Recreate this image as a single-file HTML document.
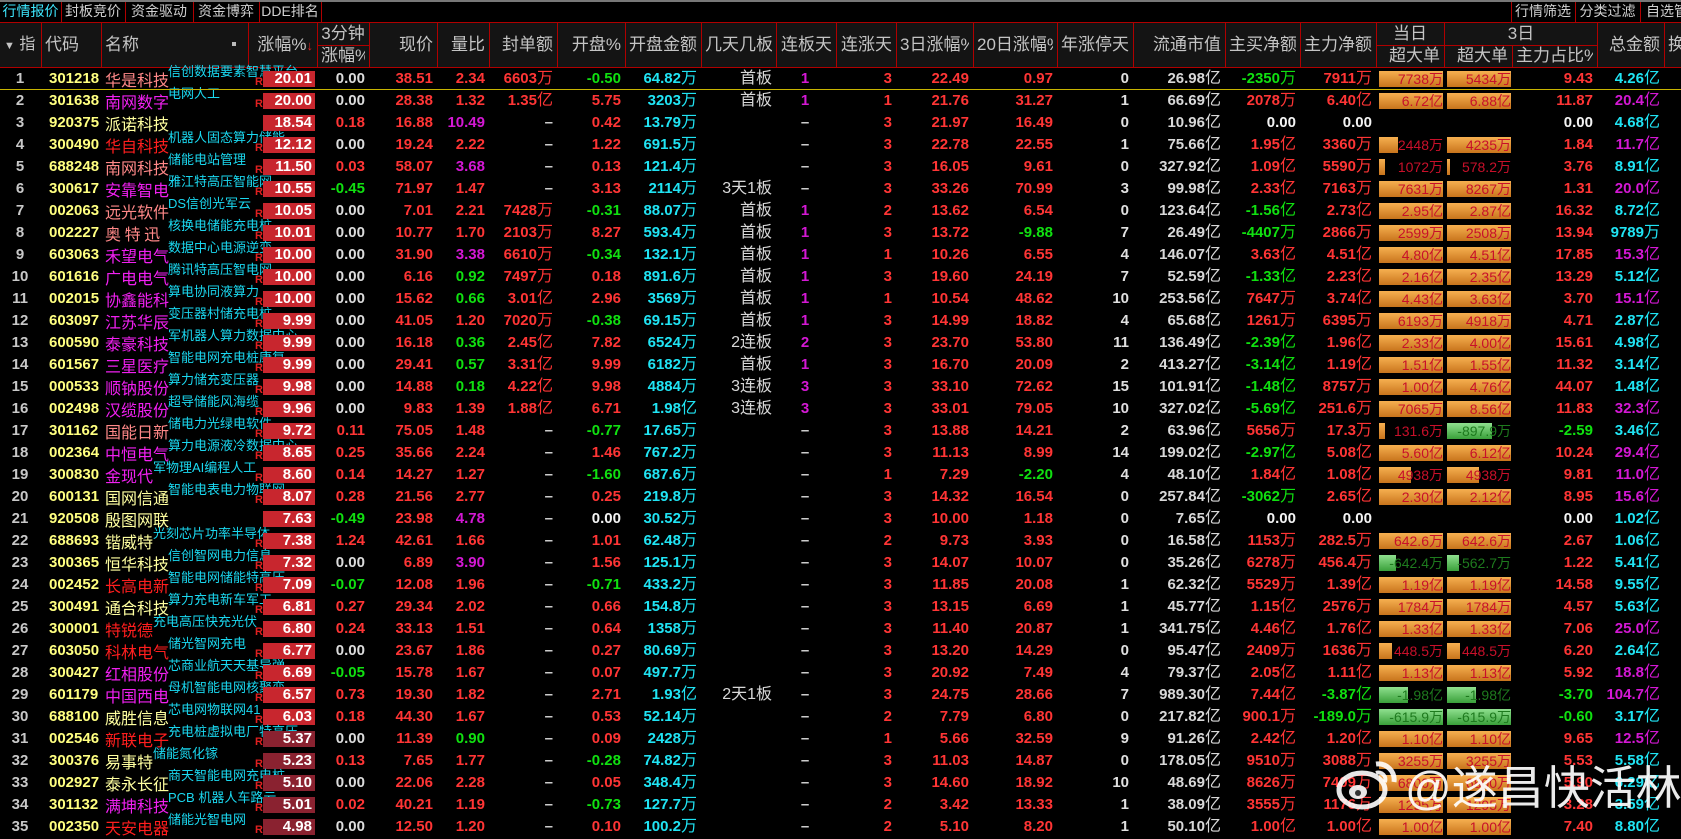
<!DOCTYPE html>
<html><head><meta charset="utf-8">
<style>
*{margin:0;padding:0;box-sizing:border-box}
body{width:1681px;height:823px;background:#000;overflow:hidden;position:relative;font-family:"Liberation Sans","Noto Sans CJK SC",sans-serif}
.a{position:absolute;white-space:nowrap}
.n{font-weight:bold;font-size:15px;line-height:22px;height:22px}
.u{font-weight:normal;font-size:16px;line-height:14px;font-family:"Noto Sans CJK SC",sans-serif}
.vl{position:absolute;width:1px;background:#b00000}
.tab{position:absolute;top:0;height:22px;line-height:22px;font-size:14px;color:#d0d0d0;text-align:center;font-family:"Liberation Sans","Noto Sans CJK SC",sans-serif}
</style></head><body>
<div class="a" style="left:0;top:0;width:1681px;height:2px;background:#777"></div>
<div class="a" style="left:0;top:22px;width:1681px;height:1px;background:#b00000"></div>
<div class="tab" style="left:0;width:61px;color:#3ee8ff">行情报价</div>
<div class="tab" style="left:61px;width:64px">封板竞价</div>
<div class="tab" style="left:125px;width:68px">资金驱动力</div>
<div class="tab" style="left:193px;width:66px">资金博弈</div>
<div class="tab" style="left:259px;width:62px">DDE排名</div>
<div class="tab" style="left:1511px;width:64px">行情筛选</div>
<div class="tab" style="left:1575px;width:65px">分类过滤</div>
<div class="tab" style="left:1640px;width:60px;text-align:left;padding-left:6px">自选管</div>
<div class="vl" style="left:61px;top:2px;height:20px"></div>
<div class="vl" style="left:125px;top:2px;height:20px"></div>
<div class="vl" style="left:193px;top:2px;height:20px"></div>
<div class="vl" style="left:259px;top:2px;height:20px"></div>
<div class="vl" style="left:321px;top:2px;height:20px"></div>
<div class="vl" style="left:1511px;top:2px;height:20px"></div>
<div class="vl" style="left:1575px;top:2px;height:20px"></div>
<div class="vl" style="left:1640px;top:2px;height:20px"></div>
<div id="hdr" class="a" style="left:0;top:23px;width:1681px;height:44px;background:#141414"></div>
<div class="a" style="left:0;top:67px;width:1681px;height:1px;background:#b00000"></div>
<div id="root"></div>
<div class="a" style="left:0;top:89px;width:1681px;height:1px;background:#c8b400"></div>
<svg class="a" style="left:1336px;top:758px" width="68" height="52" viewBox="0 0 68 52">
<ellipse cx="26" cy="32" rx="23" ry="17" fill="none" stroke="#fff" stroke-width="5" opacity="0.9"/>
<ellipse cx="22" cy="34" rx="9" ry="7" fill="#fff" opacity="0.9"/>
<circle cx="22" cy="35" r="3" fill="#333"/>
<path d="M40 6 A16 16 0 0 1 58 24" fill="none" stroke="#fff" stroke-width="5" opacity="0.9"/>
<path d="M40 15 A7 7 0 0 1 49 24" fill="none" stroke="#fff" stroke-width="4" opacity="0.9"/>
</svg>
<div class="a" style="left:1405px;top:752px;font-size:46px;color:#fff;opacity:0.92;font-family:'Liberation Sans','Noto Sans CJK SC',sans-serif">@遂昌快活林</div>
<script>
var C=[[0,41],[41,101],[101,248],[248,317],[317,369],[369,437],[437,489],[489,557],[557,625],[625,701],[701,776],[776,836],[836,896],[896,973],[973,1057],[1057,1133],[1133,1225],[1225,1300],[1300,1376],[1376,1444],[1444,1512],[1512,1597],[1597,1664],[1664,1690]];
var R=document.getElementById('root');var H='';
function el(x,y,w,h,st,t){H+='<div class="a" style="left:'+x+'px;top:'+y+'px;width:'+w+'px;height:'+h+'px;'+st+'">'+t+'</div>';}
C.forEach(function(c,i){if(i>0){var top=(i==21)?45:23;H+='<div class="vl" style="left:'+c[0]+'px;top:'+top+'px;height:'+(67-top)+'px"></div>';}});
function ht(i,txt,align,top,h){var c=C[i];el(c[0]+4,top||23,c[1]-c[0]-8,h||44,'line-height:'+(h||44)+'px;text-align:'+(align||'right')+';color:#c4c4c4;font-size:17px;overflow:hidden',txt);}
el(4,23,37,44,'line-height:44px;color:#c4c4c4;font-size:16px','<span style="font-size:11px">▼</span> 指');
ht(1,'代码','left');ht(2,'名称','left');
el(232,42,4,4,'background:#bbb','');
ht(3,'涨幅%<span style="color:#e02020;font-size:13px">↓</span>','right');
H+='<div class="a" style="left:317px;top:45px;width:52px;height:1px;background:#b00000"></div>';
ht(4,'3分钟','center',23,22);ht(4,'涨幅%','center',45,22);
var hs=['','','','','','现价','量比','封单额','开盘%','开盘金额','几天几板','连板天','连涨天','3日涨幅%','20日涨幅%','年涨停天','流通市值','主买净额','主力净额'];
for(var i=5;i<19;i++)ht(i,hs[i],i==10?'center':'right');
H+='<div class="a" style="left:1376px;top:45px;width:221px;height:1px;background:#b00000"></div>';
el(1376,23,68,22,'line-height:22px;text-align:center;color:#c4c4c4;font-size:17px','当日');
el(1445,23,152,22,'line-height:22px;text-align:center;color:#c4c4c4;font-size:17px','3日');
ht(19,'超大单','right',45,22);ht(20,'超大单','right',45,22);ht(21,'主力占比%','right',45,22);
ht(22,'总金额','right');ht(23,'换','left');
var RED='#ff3535',GRN='#10e010',WHT='#f4f4f4',CY='#20e4f4',MG='#d418d4',GR='#d0d0d0';
var NC={r:'#ff1e1e',s:'#ff8888',m:'#f020f0',y:'#ffffa0'};
var D=[
['301218','华是科技','s','信创数据要素智慧平台','20.01','0.00','38.51','2.34','6603万','-0.50','64.82万','首板','1','3','22.49','0.97','0','26.98亿','-2350万','7911万','7738万',1,'5434万',1,'9.43','4.26亿'],
['301638','南网数字','m','电网人工','20.00','0.00','28.38','1.32','1.35亿','5.75','3203万','首板','1','1','21.76','31.27','1','66.69亿','2078万','6.40亿','6.72亿',1,'6.88亿',1,'11.87','20.4亿'],
['920375','派诺科技','y','','18.54','0.18','16.88','10.49','–','0.42','13.79万','','–','3','21.97','16.49','0','10.96亿','0.00','0.00','',0,'',0,'0.00','4.68亿'],
['300490','华自科技','r','机器人固态算力储能','12.12','0.00','19.24','2.22','–','1.22','691.5万','','–','3','22.78','22.55','1','75.66亿','1.95亿','3360万','2448万',.3,'4235万',1,'1.84','11.7亿'],
['688248','南网科技','s','储能电站管理','11.50','0.03','58.07','3.68','–','0.13','121.4万','','–','3','16.05','9.61','0','327.92亿','1.09亿','5590万','1072万',.1,'578.2万',.05,'3.76','8.91亿'],
['300617','安靠智电','m','雅江特高压智能网','10.55','-0.45','71.97','1.47','–','3.13','2114万','3天1板','–','3','33.26','70.99','3','99.98亿','2.33亿','7163万','7631万',1,'8267万',1,'1.31','20.0亿'],
['002063','远光软件','s','DS信创光军云','10.05','0.00','7.01','2.21','7428万','-0.31','88.07万','首板','1','2','13.62','6.54','0','123.64亿','-1.56亿','2.73亿','2.95亿',1,'2.87亿',1,'16.32','8.72亿'],
['002227','奥 特 迅','s','核换电储能充电桩','10.01','0.00','10.77','1.70','2103万','8.27','593.4万','首板','1','3','13.72','-9.88','7','26.49亿','-4407万','2866万','2599万',1,'2508万',1,'13.94','9789万'],
['603063','禾望电气','m','数据中心电源逆变','10.00','0.00','31.90','3.38','6610万','-0.34','132.1万','首板','1','1','10.26','6.55','4','146.07亿','3.63亿','4.51亿','4.80亿',1,'4.51亿',1,'17.85','15.3亿'],
['601616','广电电气','m','腾讯特高压智电网','10.00','0.00','6.16','0.92','7497万','0.18','891.6万','首板','1','3','19.60','24.19','7','52.59亿','-1.33亿','2.23亿','2.16亿',1,'2.35亿',1,'13.29','5.12亿'],
['002015','协鑫能科','m','算电协同液算力','10.00','0.00','15.62','0.66','3.01亿','2.96','3569万','首板','1','1','10.54','48.62','10','253.56亿','7647万','3.74亿','4.43亿',1,'3.63亿',1,'3.70','15.1亿'],
['603097','江苏华辰','m','变压器村储充电桩','9.99','0.00','41.05','1.20','7020万','-0.38','69.15万','首板','1','3','14.99','18.82','4','65.68亿','1261万','6395万','6193万',1,'4918万',1,'4.71','2.87亿'],
['600590','泰豪科技','m','军机器人算力数据中心','9.99','0.00','16.18','0.36','2.45亿','7.82','6524万','2连板','2','3','23.70','53.80','11','136.49亿','-2.39亿','1.96亿','2.33亿',1,'4.00亿',1,'15.61','4.98亿'],
['601567','三星医疗','m','智能电网充电桩康复','9.99','0.00','29.41','0.57','3.31亿','9.99','6182万','首板','1','3','16.70','20.09','2','413.27亿','-3.14亿','1.19亿','1.51亿',1,'1.55亿',1,'11.32','3.14亿'],
['000533','顺钠股份','m','算力储充变压器','9.98','0.00','14.88','0.18','4.22亿','9.98','4884万','3连板','3','3','33.10','72.62','15','101.91亿','-1.48亿','8757万','1.00亿',1,'4.76亿',1,'44.07','1.48亿'],
['002498','汉缆股份','m','超导储能风海缆','9.96','0.00','9.83','1.39','1.88亿','6.71','1.98亿','3连板','3','3','33.01','79.05','10','327.02亿','-5.69亿','251.6万','7065万',1,'8.56亿',1,'11.83','32.3亿'],
['301162','国能日新','s','储电力光绿电软件','9.72','0.11','75.05','1.48','–','-0.77','17.65万','','–','3','13.88','14.21','2','63.96亿','5656万','17.3万','131.6万',.1,'-897.9万',.7,'-2.59','3.46亿'],
['002364','中恒电气','m','算力电源液冷数据中心','8.65','0.25','35.66','2.24','–','1.46','767.2万','','–','3','11.13','8.99','14','199.02亿','-2.97亿','5.08亿','5.60亿',1,'6.12亿',1,'10.24','29.4亿'],
['300830','金现代','m','军物理AI编程人工','8.60','0.14','14.27','1.27','–','-1.60','687.6万','','–','1','7.29','-2.20','4','48.10亿','1.84亿','1.08亿','4938万',.5,'4938万',.5,'9.81','11.0亿'],
['600131','国网信通','y','智能电表电力物联网','8.07','0.28','21.56','2.77','–','0.25','219.8万','','–','3','14.32','16.54','0','257.84亿','-3062万','2.65亿','2.30亿',1,'2.12亿',1,'8.95','15.6亿'],
['920508','殷图网联','y','','7.63','-0.49','23.98','4.78','–','0.00','30.52万','','–','3','10.00','1.18','0','7.65亿','0.00','0.00','',0,'',0,'0.00','1.02亿'],
['688693','锴威特','y','光刻芯片功率半导体','7.38','1.24','42.61','1.66','–','1.01','62.48万','','–','2','9.73','3.93','0','16.58亿','1153万','282.5万','642.6万',1,'642.6万',1,'2.67','1.06亿'],
['300365','恒华科技','y','信创智网电力信息','7.32','0.00','6.89','3.90','–','1.56','125.1万','','–','3','14.07','10.07','0','35.26亿','6278万','456.4万','-642.4万',.26,'-562.7万',.18,'1.22','5.41亿'],
['002452','长高电新','r','智能电网储能特高压','7.09','-0.07','12.08','1.96','–','-0.71','433.2万','','–','3','11.85','20.08','1','62.32亿','5529万','1.39亿','1.19亿',1,'1.19亿',1,'14.58','9.55亿'],
['300491','通合科技','y','算力充电新车军工','6.81','0.27','29.34','2.02','–','0.66','154.8万','','–','3','13.15','6.69','1','45.77亿','1.15亿','2576万','1784万',1,'1784万',1,'4.57','5.63亿'],
['300001','特锐德','r','充电高压快充光伏','6.80','0.24','33.13','1.51','–','0.64','1358万','','–','3','11.40','20.87','1','341.75亿','4.46亿','1.76亿','1.33亿',1,'1.33亿',1,'7.06','25.0亿'],
['603050','科林电气','r','储光智网充电','6.77','0.00','23.67','1.86','–','0.27','80.69万','','–','3','13.20','14.29','0','95.47亿','2409万','1636万','448.5万',.2,'448.5万',.2,'6.20','2.64亿'],
['300427','红相股份','m','芯商业航天天基导弹','6.69','-0.05','15.78','1.67','–','0.07','497.7万','','–','3','20.92','7.49','4','79.37亿','2.05亿','1.11亿','1.13亿',1,'1.13亿',1,'5.92','18.8亿'],
['601179','中国西电','m','母机智能电网核聚变','6.57','0.73','19.30','1.82','–','2.71','1.93亿','2天1板','–','3','24.75','28.66','7','989.30亿','7.44亿','-3.87亿','-1.98亿',.45,'-1.98亿',.45,'-3.70','104.7亿'],
['688100','威胜信息','y','芯电网物联网41','6.03','0.18','44.30','1.67','–','0.53','52.14万','','–','2','7.79','6.80','0','217.82亿','900.1万','-189.0万','-615.9万',1,'-615.9万',1,'-0.60','3.17亿'],
['002546','新联电子','r','充电桩虚拟电厂特高压','5.37','0.00','11.39','0.90','–','0.09','2428万','','–','1','5.66','32.59','9','91.26亿','2.42亿','1.20亿','1.10亿',1,'1.10亿',1,'9.65','12.5亿'],
['300376','易事特','y','储能氮化镓','5.23','0.13','7.65','1.77','–','-0.28','74.82万','','–','3','11.03','14.87','0','178.05亿','9510万','3088万','3255万',1,'3255万',1,'5.53','5.58亿'],
['002927','泰永长征','y','商天智能电网充电桩','5.10','0.00','22.06','2.28','–','0.05','348.4万','','–','3','14.60','18.92','10','48.69亿','8626万','7409万','6800万',1,'6800万',1,'5.90','6.29亿'],
['301132','满坤科技','m','PCB 机器人车路云','5.01','0.02','40.21','1.19','–','-0.73','127.7万','','–','2','3.42','13.33','1','38.09亿','3555万','1176万','1295万',1,'1295万',1,'3.28','3.59亿'],
['002350','天安电器','r','储能光智电网','4.98','0.00','12.50','1.20','–','0.10','100.2万','','–','2','5.10','8.20','1','50.10亿','1.00亿','1.00亿','1.00亿',1,'1.00亿',1,'7.40','8.80亿']
];
function fmt(s){return s.replace(/([万亿])/,'<span class="u">$1</span>');}
function sc(s){if(s==='0.00'||s==='0')return WHT;return s.charAt(0)==='-'?GRN:RED;}
function cell(i,y,txt,col,align){var c=C[i];if(txt==='')return;el(c[0]+2,y,c[1]-c[0]-6,22,'overflow:hidden;color:'+col+';text-align:'+(align||'right'),'<span class="n" style="display:block">'+fmt(txt)+'</span>');}
function bar(i,y,txt,w){if(!txt)return;var c=C[i];var x=c[0]+3,W=64;var neg=txt.charAt(0)==='-';
 var bg=neg?'linear-gradient(#8fe08f,#3aa03a)':'linear-gradient(#f6b050,#c8741c)';
 H+='<div class="a" style="left:'+x+'px;top:'+(y+3)+'px;width:'+Math.max(3,Math.round(W*w))+'px;height:16px;background:'+bg+'"></div>';
 el(x,y,W,22,'line-height:22px;overflow:hidden;text-align:right;font-size:14px;color:'+(neg?'#1e7a1e':'#c8102a'),txt.replace(/([万亿])/,'<span style="font-family:Noto Sans CJK SC;line-height:14px">$1</span>'));}
D.forEach(function(d,k){var y=68+k*22;
 el(0,y,40,22,'line-height:22px;text-align:center;color:#c8c8c8;font-weight:bold;font-size:15px',String(k+1));
 el(49,y,52,22,'line-height:22px;color:#ffff80;font-weight:bold;font-size:15px',d[0]);
 var nw=d[1].length*15.5;
 el(105,y,nw+4,22,'line-height:22px;font-size:16px;color:'+NC[d[2]]+';font-family:Noto Sans CJK SC,sans-serif',d[1]);
 if(d[3])el(105+(d[1].length==3?47:62)+1,y-4,300-(105+62),18,'line-height:16px;font-size:13px;color:#1ad8f0;overflow:hidden;font-family:Liberation Sans,Noto Sans CJK SC,sans-serif',d[3]);
 if(d[3])el(255,y+8,8,12,'font-size:11px;font-weight:bold;line-height:12px;color:#e02020','R');
 var v=parseFloat(d[4]);
 el(263,y+3,52,16,'background:'+(v>=6?'#c8262e':'#8a2230')+';color:#fff;font-weight:bold;font-size:15px;line-height:16px;text-align:right;padding-right:3px',d[4]);
 cell(4,y,d[5],d[5]==='0.00'?'#dcdcdc':sc(d[5]));
 cell(5,y,d[6],RED);
 var lb=parseFloat(d[7]);cell(6,y,d[7],lb>=3?MG:(lb<1?GRN:RED));
 cell(7,y,d[8],d[8]==='–'?GR:RED);
 cell(8,y,d[9],sc(d[9]));
 cell(9,y,d[10],CY);
 if(d[11])el(701,y,71,22,'line-height:22px;text-align:right;color:#d8d8d8;font-size:16px;font-family:Liberation Sans,Noto Sans CJK SC,sans-serif',d[11]);
 cell(11,y,d[12],d[12]==='–'?GR:MG,'center');
 cell(12,y,d[13],RED);
 cell(13,y,d[14],sc(d[14]));cell(14,y,d[15],sc(d[15]));
 cell(15,y,d[16],'#e0e0e0');
 cell(16,y,d[17],'#d8d8d8');
 cell(17,y,d[18],sc(d[18]));cell(18,y,d[19],sc(d[19]));
 bar(19,y,d[20],d[21]);bar(20,y,d[22],d[23]);
 cell(21,y,d[24],sc(d[24]));
 var t=d[25];var big=t.indexOf('亿')>0&&parseFloat(t)>=10;cell(22,y,t,big?MG:CY);
});
R.innerHTML=H;
</script>
</body></html>
